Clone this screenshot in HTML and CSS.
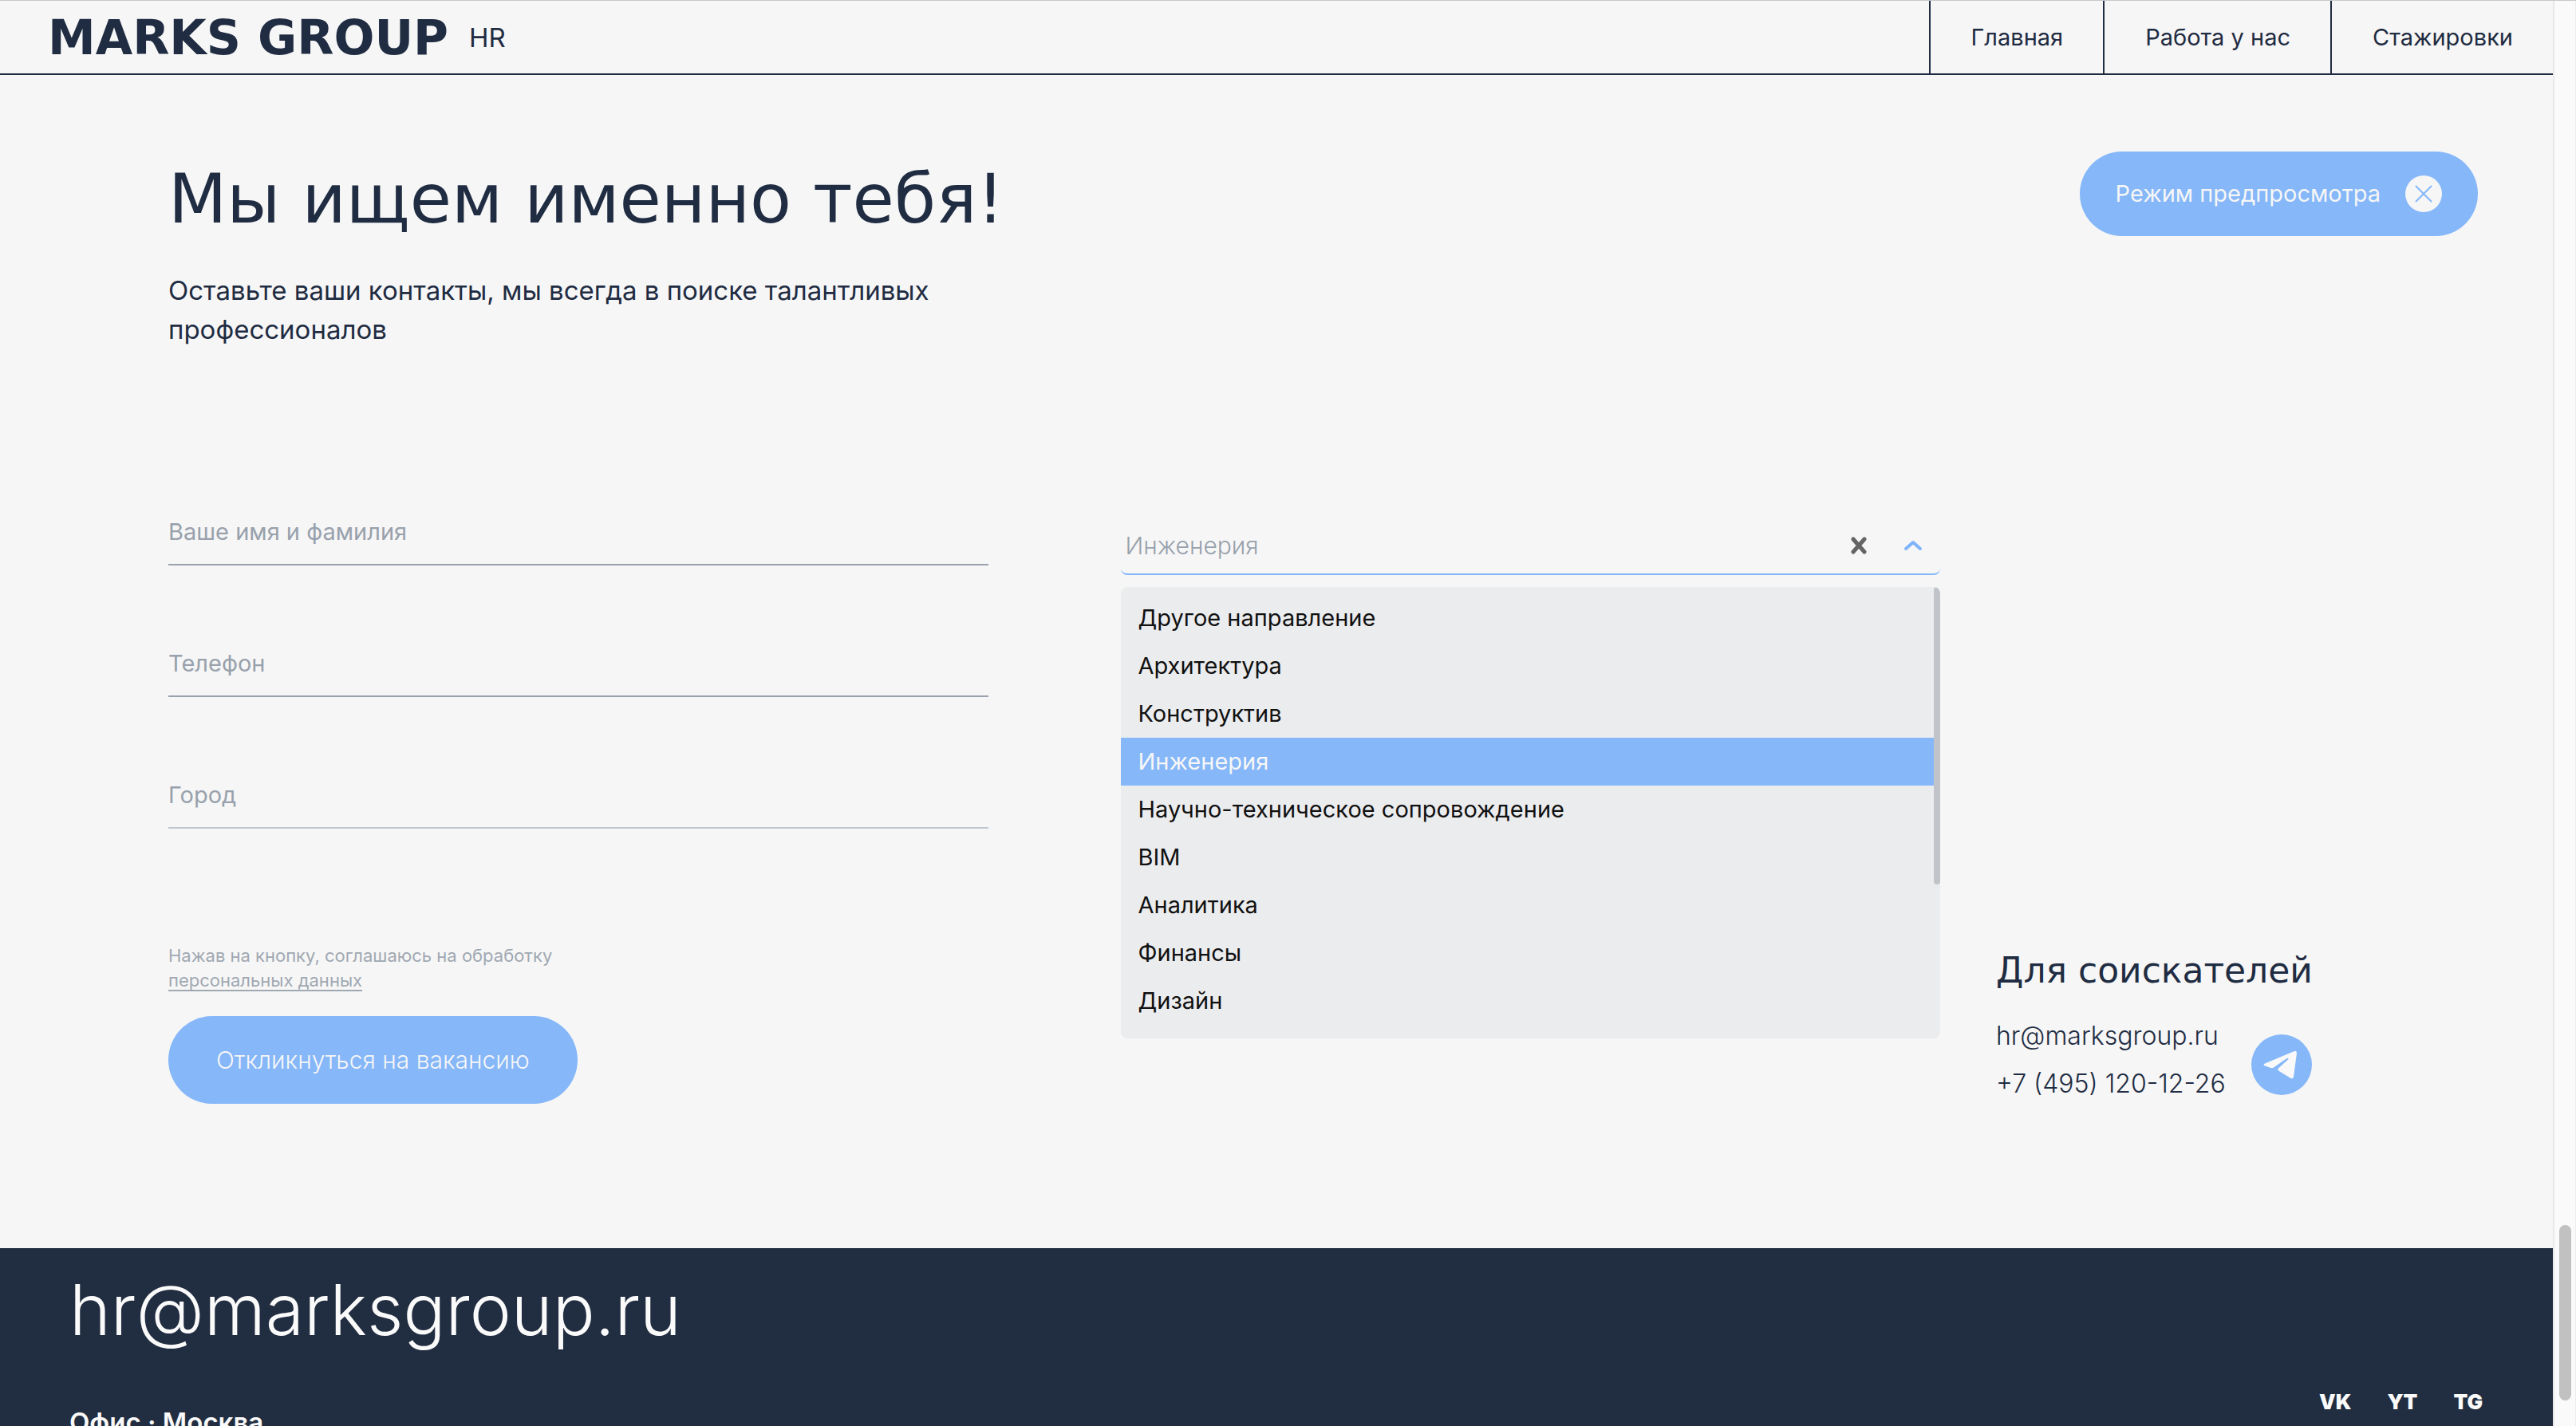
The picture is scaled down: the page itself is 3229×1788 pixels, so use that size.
FILE: index.html
```html
<!DOCTYPE html>
<html lang="ru">
<head>
<meta charset="utf-8">
<meta name="viewport" content="width=device-width, initial-scale=1">
<title>MARKS GROUP HR</title>
<link rel="stylesheet" href="styles.css">
</head>
<body>
<div class="page">
  <header class="header">
    <a class="brand" href="#"><span class="brand-name">MARKS GROUP</span><span class="brand-unit">HR</span></a>
    <nav class="nav">
      <a href="#">Главная</a>
      <a href="#">Работа у нас</a>
      <a href="#">Стажировки</a>
    </nav>
  </header>

  <main class="main">
    <section class="hero">
      <div class="hero-text">
        <h1>Мы ищем именно тебя!</h1>
        <p>Оставьте ваши контакты, мы всегда в поиске талантливых профессионалов</p>
      </div>
      <button class="preview" type="button">
        Режим предпросмотра
        <svg viewBox="0 0 46 46" aria-hidden="true"><circle cx="23" cy="23" r="23" fill="#f6f6f6"/><path d="M13 13L33 33M33 13L13 33" stroke="#85b7f9" stroke-width="2" fill="none"/></svg>
      </button>
    </section>

    <section class="apply">
      <form class="form">
        <div class="fields">
          <div class="inputs">
            <input type="text" aria-label="Ваше имя и фамилия" placeholder="Ваше имя и фамилия">
            <input type="tel" aria-label="Телефон" placeholder="Телефон">
            <input type="text" aria-label="Город" placeholder="Город" class="faint">
          </div>
          <p class="consent">Нажав на кнопку, соглашаюсь на обработку <a href="#">персональных данных</a></p>
          <button class="submit" type="submit">Откликнуться на вакансию</button>
        </div>

        <div class="picker">
          <div class="picker-head">
            <input type="text" aria-label="Направление" placeholder="Инженерия">
            <button type="button" aria-label="Очистить"><svg width="20" height="22" viewBox="0 0 20 22"><path d="M3 3L17 19M17 3L3 19" stroke="#646464" stroke-width="5" stroke-linecap="round"/></svg></button>
            <button type="button" aria-label="Свернуть"><svg width="24" height="16" viewBox="0 0 24 16"><path d="M3 12L12 4L21 12" stroke="#7fb4fb" stroke-width="4" stroke-linecap="round" stroke-linejoin="round" fill="none"/></svg></button>
          </div>
          <div class="list">
            <select size="9" aria-label="Список направлений">
              <option>Другое направление</option>
              <option>Архитектура</option>
              <option>Конструктив</option>
              <option selected>Инженерия</option>
              <option>Научно-техническое сопровождение</option>
              <option>BIM</option>
              <option>Аналитика</option>
              <option>Финансы</option>
              <option>Дизайн</option>
            </select>
            <span class="list-thumb"></span>
          </div>
        </div>
      </form>

      <aside class="contacts">
        <h2>Для соискателей</h2>
        <div class="contacts-row">
          <div class="contacts-links">
            <a href="#">hr@marksgroup.ru</a>
            <a href="#">+7 (495) 120-12-26</a>
          </div>
          <a class="telegram" href="#" aria-label="Telegram">
            <svg viewBox="0 0 76 76"><circle cx="38" cy="38" r="38" fill="#85b7f9"/><path d="M17 36.500L54 21Q57 20 57 23.500L53 53Q52.500 56.500 49.500 55L34 45.500Q32.500 44 34 42.500L46.500 31Q47 29 44.500 30L28 41.500Q26.500 42.500 24.500 42L17 39.500Q14 38 17 36.500Z" fill="#f9f9f9"/></svg>
          </a>
        </div>
      </aside>
    </section>
  </main>

  <footer class="footer">
    <a class="footer-mail" href="#">hr@marksgroup.ru</a>
    <div class="footer-row">
      <strong class="office">Офис · Москва</strong>
      <nav class="social">
        <a href="#">VK</a>
        <a href="#">YT</a>
        <a href="#">TG</a>
      </nav>
    </div>
  </footer>
</div>
<div class="scroll-track"><div class="scroll-thumb"></div></div>
</body>
</html>
```
FILE: styles.css
```css
:root {
  --navy: #1f2c42;
  --blue: #85b7f9;
  --grey: #98a1ac;
  --paper: #f6f6f6;
}

* { box-sizing: border-box; }

body {
  margin: 0;
  height: 100vh;
  overflow: hidden;
  display: flex;
  border-top: 1px solid #c8c8c8;
  background: var(--paper);
  color: var(--navy);
  font: 400 29px/40px Inter, "Liberation Sans", sans-serif;
}

a { color: inherit; text-decoration: none; }
h1, h2, p { margin: 0; }
button, input, select { font: inherit; border: 0; border-radius: 0; background: none; padding: 0; margin: 0; outline: 0; }
svg { display: block; }

.page { flex: 1; min-width: 0; }

/* header */
.header {
  display: flex;
  justify-content: space-between;
  border-bottom: 2px solid var(--navy);
  padding-left: 60px;
}
.brand { display: flex; align-items: center; gap: 26px; }
.brand-name { font: bold 60px/60px "DejaVu Sans", sans-serif; }
.brand-unit { font-size: 33px; }
.nav { display: flex; }
.nav a { border-left: 2px solid var(--navy); padding: 26px 50px 25px 51px; }

/* hero */
.hero {
  display: flex;
  justify-content: space-between;
  align-items: flex-start;
  padding: 96px 94px 0 211px;
}
.hero-text { max-width: 1100px; padding-top: 10px; }
h1 { font: 400 85px/100px "DejaVu Sans", sans-serif; white-space: nowrap; }
.hero p { margin-top: 40px; max-width: 1028px; font-size: 33px; line-height: 49px; }
.preview {
  display: flex;
  align-items: center;
  gap: 31px;
  height: 106px;
  padding: 0 45px;
  border-radius: 53px;
  background: var(--blue);
  color: #f6f6f6;
}
.preview svg { width: 46px; height: 46px; }

/* application form */
.apply {
  display: flex;
  gap: 70px;
  padding: 187px 302px 176px 211px;
}
.form { flex: 1; display: grid; grid-template-columns: 1fr 1fr; gap: 166px; }
.fields { padding-bottom: 5px; }
.inputs { display: grid; gap: 81px; }
.inputs input {
  width: 100%;
  height: 84px;
  border-bottom: 2px solid var(--grey);
}
.inputs .faint { border-color: #c0c7cd; }
input::placeholder { color: var(--grey); opacity: 1; }
.consent {
  margin: 144px 0 29px;
  max-width: 500px;
  color: #a0a8b2;
  font-size: 22px;
  line-height: 31px;
}
.consent a { text-decoration: underline; text-underline-offset: 4px; }
.submit {
  height: 110px;
  padding: 0 60px;
  border-radius: 55px;
  background: var(--blue);
  color: #f6f6f6;
  font-size: 30px;
  font-weight: 300;
}

/* direction picker */
.picker { padding-top: 24px; }
.picker-head {
  display: flex;
  align-items: center;
  height: 72px;
  padding: 0 22px 0 6px;
  border-bottom: 2px solid var(--blue);
  border-radius: 0 0 8px 8px;
}
.picker-head input { flex: 1; min-width: 0; font-size: 30px; font-weight: 300; }
.picker-head button + button { margin-left: 46px; }
.list {
  position: relative;
  height: 566px;
  margin-top: 15px;
  padding: 9px 8px 0 0;
  border-radius: 8px;
  background: #ebecee;
  overflow: hidden;
}
.list select { display: block; width: 100%; height: 540px; overflow: hidden; scrollbar-width: none; color: #111; }
.list option { height: 60px; padding: 12px 22px; color: #111; }
.list option:checked { background: var(--blue) linear-gradient(var(--blue), var(--blue)); color: #f6f6f6; -webkit-text-fill-color: #f6f6f6; }
.list-thumb { position: absolute; top: 0; right: 0; width: 8px; height: 373px; border-radius: 4px; background: #c0c4c9; }

/* contacts */
.contacts { width: 396px; align-self: flex-end; }
h2 { font: 400 44px/60px "DejaVu Sans", sans-serif; white-space: nowrap; margin-bottom: 22px; }
.contacts-row { display: flex; justify-content: space-between; align-items: flex-end; }
.contacts-links { display: grid; font-size: 32px; font-weight: 300; line-height: 60px; }
.telegram { width: 76px; margin-bottom: 16px; }

/* footer */
.footer { background: #212d40; color: #fafafa; padding: 27px 88px 60px 87px; }
.footer-mail { display: block; font-size: 88px; font-weight: 300; line-height: 100px; }
.footer-row { display: flex; justify-content: space-between; align-items: flex-start; margin-top: 50px; }
.office { margin-top: 21px; font-size: 33px; font-weight: 600; }
.social { display: flex; gap: 45px; font-size: 26px; font-weight: 900; line-height: 32px; }

/* page scrollbar */
.scroll-track {
  width: 29px;
  padding: 1535px 5px 0 6px;
  border-left: 2px solid #e8e8e8;
  border-right: 1px solid #ececec;
  background: #fafafa;
}
.scroll-thumb { height: 220px; border-radius: 8px; background: #c1c1c1; }
```
